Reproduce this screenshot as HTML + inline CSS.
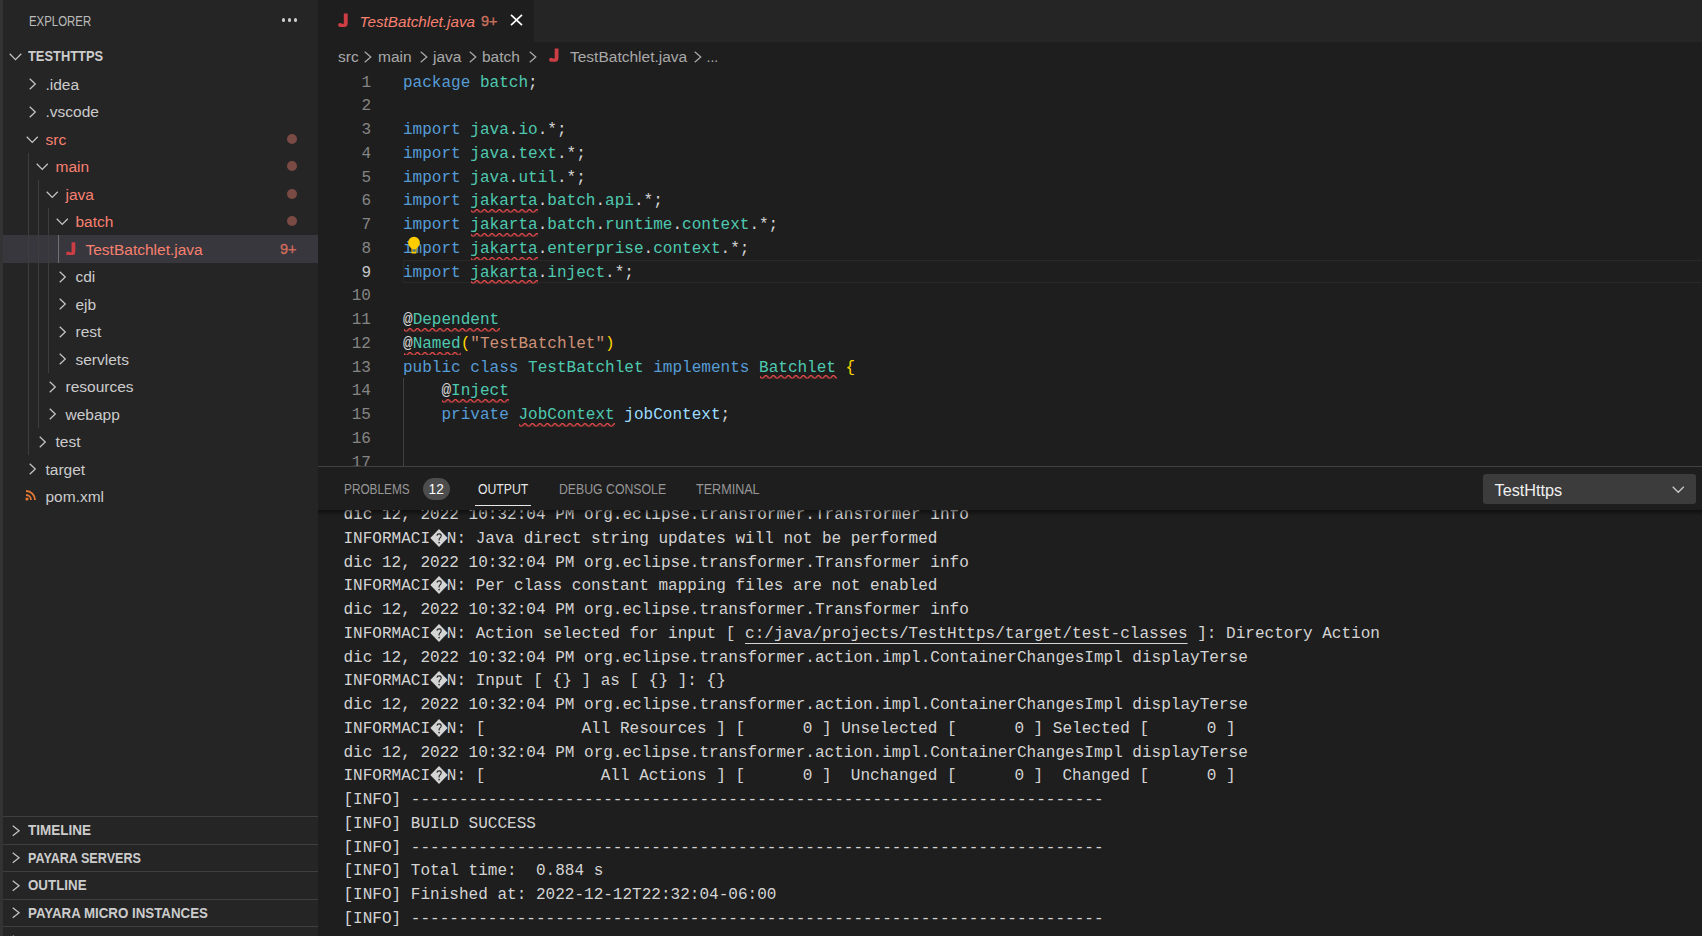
<!DOCTYPE html>
<html><head><meta charset="utf-8"><style>
html,body{margin:0;padding:0;width:1702px;height:936px;overflow:hidden;background:#1e1e1e}
body{position:relative;font-family:'Liberation Sans', sans-serif}
</style></head><body>
<div style="position:absolute;left:0px;top:0px;width:1702px;height:936px;background:#1e1e1e;"></div>
<div style="position:absolute;left:0px;top:0px;width:3px;height:936px;background:#333333;"></div>
<div style="position:absolute;left:3px;top:0px;width:315px;height:936px;background:#252526;"></div>
<div style="position:absolute;left:29px;top:22.23px;line-height:0;white-space:pre;font-family:'Liberation Sans', sans-serif;font-size:13.75px;color:#bbbbbb;transform:scaleX(0.83);transform-origin:0 0;">EXPLORER</div>
<div style="position:absolute;left:281.6px;top:18.4px;width:3.2px;height:3.2px;border-radius:50%;background:#cccccc"></div>
<div style="position:absolute;left:287.8px;top:18.4px;width:3.2px;height:3.2px;border-radius:50%;background:#cccccc"></div>
<div style="position:absolute;left:294.0px;top:18.4px;width:3.2px;height:3.2px;border-radius:50%;background:#cccccc"></div>
<svg style="position:absolute;left:9px;top:52.5px;overflow:visible" width="13" height="7.3" viewBox="0 0 13 7.3"><path d="M0.72 0.72 L6.50 6.58 L12.28 0.72" fill="none" stroke="#c5c5c5" stroke-width="1.25"/></svg>
<div style="position:absolute;left:28px;top:56.73px;line-height:0;white-space:pre;font-family:'Liberation Sans', sans-serif;font-size:13.75px;color:#cccccc;font-weight:700;transform:scaleX(0.937);transform-origin:0 0;">TESTHTTPS</div>
<div style="position:absolute;left:3px;top:235.0px;width:315px;height:27.5px;background:#37373d;"></div>
<div style="position:absolute;left:28px;top:152.5px;width:1px;height:302.5px;background:#3d3d3e;"></div>
<div style="position:absolute;left:38px;top:180.0px;width:1px;height:247.5px;background:#3d3d3e;"></div>
<div style="position:absolute;left:48px;top:207.5px;width:1px;height:165.0px;background:#3d3d3e;"></div>
<div style="position:absolute;left:58px;top:235.0px;width:1px;height:27.5px;background:#6f6f74;"></div>
<svg style="position:absolute;left:29px;top:78.0px;overflow:visible" width="7" height="12" viewBox="0 0 7 12"><path d="M0.72 0.72 L6.28 6.00 L0.72 11.28" fill="none" stroke="#c5c5c5" stroke-width="1.25"/></svg>
<div style="position:absolute;left:45.5px;top:84.63px;line-height:0;white-space:pre;font-family:'Liberation Sans', sans-serif;font-size:15.5px;color:#cccccc;">.idea</div>
<svg style="position:absolute;left:29px;top:105.5px;overflow:visible" width="7" height="12" viewBox="0 0 7 12"><path d="M0.72 0.72 L6.28 6.00 L0.72 11.28" fill="none" stroke="#c5c5c5" stroke-width="1.25"/></svg>
<div style="position:absolute;left:45.5px;top:112.13px;line-height:0;white-space:pre;font-family:'Liberation Sans', sans-serif;font-size:15.5px;color:#cccccc;">.vscode</div>
<svg style="position:absolute;left:25.5px;top:135.5px;overflow:visible" width="12.5" height="7.2" viewBox="0 0 12.5 7.2"><path d="M0.72 0.72 L6.25 6.48 L11.78 0.72" fill="none" stroke="#c5c5c5" stroke-width="1.25"/></svg>
<div style="position:absolute;left:45.5px;top:139.63px;line-height:0;white-space:pre;font-family:'Liberation Sans', sans-serif;font-size:15.5px;color:#f88070;">src</div>
<div style="position:absolute;left:287px;top:133.75px;width:10px;height:10px;border-radius:50%;background:#7a4a44"></div>
<svg style="position:absolute;left:35.5px;top:163.0px;overflow:visible" width="12.5" height="7.2" viewBox="0 0 12.5 7.2"><path d="M0.72 0.72 L6.25 6.48 L11.78 0.72" fill="none" stroke="#c5c5c5" stroke-width="1.25"/></svg>
<div style="position:absolute;left:55.5px;top:167.13px;line-height:0;white-space:pre;font-family:'Liberation Sans', sans-serif;font-size:15.5px;color:#f88070;">main</div>
<div style="position:absolute;left:287px;top:161.25px;width:10px;height:10px;border-radius:50%;background:#7a4a44"></div>
<svg style="position:absolute;left:45.5px;top:190.5px;overflow:visible" width="12.5" height="7.2" viewBox="0 0 12.5 7.2"><path d="M0.72 0.72 L6.25 6.48 L11.78 0.72" fill="none" stroke="#c5c5c5" stroke-width="1.25"/></svg>
<div style="position:absolute;left:65.5px;top:194.63px;line-height:0;white-space:pre;font-family:'Liberation Sans', sans-serif;font-size:15.5px;color:#f88070;">java</div>
<div style="position:absolute;left:287px;top:188.75px;width:10px;height:10px;border-radius:50%;background:#7a4a44"></div>
<svg style="position:absolute;left:55.5px;top:218.0px;overflow:visible" width="12.5" height="7.2" viewBox="0 0 12.5 7.2"><path d="M0.72 0.72 L6.25 6.48 L11.78 0.72" fill="none" stroke="#c5c5c5" stroke-width="1.25"/></svg>
<div style="position:absolute;left:75.5px;top:222.13px;line-height:0;white-space:pre;font-family:'Liberation Sans', sans-serif;font-size:15.5px;color:#f88070;">batch</div>
<div style="position:absolute;left:287px;top:216.25px;width:10px;height:10px;border-radius:50%;background:#7a4a44"></div>
<svg style="position:absolute;left:65.8px;top:241.5px" width="10.23" height="13.95" viewBox="0 0 11 15"><path d="M6 0.4 H10 V10.2 Q10 14.6 5.8 14.6 H3.6 Q0.1 14.6 0.1 12.3 Q0.1 10.2 2.2 10.2 Q3.2 10.2 3.9 10.8 Q4.5 11.3 5.1 11.3 Q6 11.3 6 10.2 Z" fill="#cc3e44"/></svg>
<div style="position:absolute;left:85.5px;top:249.63px;line-height:0;white-space:pre;font-family:'Liberation Sans', sans-serif;font-size:15.5px;color:#f88070;">TestBatchlet.java</div>
<div style="position:absolute;left:280px;top:248.97px;line-height:0;white-space:pre;font-family:'Liberation Sans', sans-serif;font-size:14.5px;color:#d06b5e;-webkit-text-stroke:0.35px #d06b5e;">9+</div>
<svg style="position:absolute;left:59px;top:270.5px;overflow:visible" width="7" height="12" viewBox="0 0 7 12"><path d="M0.72 0.72 L6.28 6.00 L0.72 11.28" fill="none" stroke="#c5c5c5" stroke-width="1.25"/></svg>
<div style="position:absolute;left:75.5px;top:277.13px;line-height:0;white-space:pre;font-family:'Liberation Sans', sans-serif;font-size:15.5px;color:#cccccc;">cdi</div>
<svg style="position:absolute;left:59px;top:298.0px;overflow:visible" width="7" height="12" viewBox="0 0 7 12"><path d="M0.72 0.72 L6.28 6.00 L0.72 11.28" fill="none" stroke="#c5c5c5" stroke-width="1.25"/></svg>
<div style="position:absolute;left:75.5px;top:304.63px;line-height:0;white-space:pre;font-family:'Liberation Sans', sans-serif;font-size:15.5px;color:#cccccc;">ejb</div>
<svg style="position:absolute;left:59px;top:325.5px;overflow:visible" width="7" height="12" viewBox="0 0 7 12"><path d="M0.72 0.72 L6.28 6.00 L0.72 11.28" fill="none" stroke="#c5c5c5" stroke-width="1.25"/></svg>
<div style="position:absolute;left:75.5px;top:332.13px;line-height:0;white-space:pre;font-family:'Liberation Sans', sans-serif;font-size:15.5px;color:#cccccc;">rest</div>
<svg style="position:absolute;left:59px;top:353.0px;overflow:visible" width="7" height="12" viewBox="0 0 7 12"><path d="M0.72 0.72 L6.28 6.00 L0.72 11.28" fill="none" stroke="#c5c5c5" stroke-width="1.25"/></svg>
<div style="position:absolute;left:75.5px;top:359.63px;line-height:0;white-space:pre;font-family:'Liberation Sans', sans-serif;font-size:15.5px;color:#cccccc;">servlets</div>
<svg style="position:absolute;left:49px;top:380.5px;overflow:visible" width="7" height="12" viewBox="0 0 7 12"><path d="M0.72 0.72 L6.28 6.00 L0.72 11.28" fill="none" stroke="#c5c5c5" stroke-width="1.25"/></svg>
<div style="position:absolute;left:65.5px;top:387.13px;line-height:0;white-space:pre;font-family:'Liberation Sans', sans-serif;font-size:15.5px;color:#cccccc;">resources</div>
<svg style="position:absolute;left:49px;top:408.0px;overflow:visible" width="7" height="12" viewBox="0 0 7 12"><path d="M0.72 0.72 L6.28 6.00 L0.72 11.28" fill="none" stroke="#c5c5c5" stroke-width="1.25"/></svg>
<div style="position:absolute;left:65.5px;top:414.63px;line-height:0;white-space:pre;font-family:'Liberation Sans', sans-serif;font-size:15.5px;color:#cccccc;">webapp</div>
<svg style="position:absolute;left:39px;top:435.5px;overflow:visible" width="7" height="12" viewBox="0 0 7 12"><path d="M0.72 0.72 L6.28 6.00 L0.72 11.28" fill="none" stroke="#c5c5c5" stroke-width="1.25"/></svg>
<div style="position:absolute;left:55.5px;top:442.13px;line-height:0;white-space:pre;font-family:'Liberation Sans', sans-serif;font-size:15.5px;color:#cccccc;">test</div>
<svg style="position:absolute;left:29px;top:463.0px;overflow:visible" width="7" height="12" viewBox="0 0 7 12"><path d="M0.72 0.72 L6.28 6.00 L0.72 11.28" fill="none" stroke="#c5c5c5" stroke-width="1.25"/></svg>
<div style="position:absolute;left:45.5px;top:469.63px;line-height:0;white-space:pre;font-family:'Liberation Sans', sans-serif;font-size:15.5px;color:#cccccc;">target</div>
<svg style="position:absolute;left:25px;top:489.5px" width="11" height="11" viewBox="0 0 11 11"><circle cx="2" cy="9" r="1.6" fill="#e37933"/><path d="M1 5 A5 5 0 0 1 6 10" fill="none" stroke="#e37933" stroke-width="1.8"/><path d="M1 1 A9 9 0 0 1 10 10" fill="none" stroke="#e37933" stroke-width="1.8"/></svg>
<div style="position:absolute;left:45.5px;top:497.13px;line-height:0;white-space:pre;font-family:'Liberation Sans', sans-serif;font-size:15.5px;color:#cccccc;">pom.xml</div>
<div style="position:absolute;left:3px;top:816.0px;width:315px;height:1px;background:#3f3f40;"></div>
<svg style="position:absolute;left:12.2px;top:824.5px;overflow:visible" width="7.8" height="11.5" viewBox="0 0 7.8 11.5"><path d="M0.72 0.72 L7.08 5.75 L0.72 10.78" fill="none" stroke="#c5c5c5" stroke-width="1.25"/></svg>
<div style="position:absolute;left:28.3px;top:831.23px;line-height:0;white-space:pre;font-family:'Liberation Sans', sans-serif;font-size:13.75px;color:#cccccc;font-weight:700;transform:scaleX(0.98);transform-origin:0 0;">TIMELINE</div>
<div style="position:absolute;left:3px;top:843.5px;width:315px;height:1px;background:#3f3f40;"></div>
<svg style="position:absolute;left:12.2px;top:852.0px;overflow:visible" width="7.8" height="11.5" viewBox="0 0 7.8 11.5"><path d="M0.72 0.72 L7.08 5.75 L0.72 10.78" fill="none" stroke="#c5c5c5" stroke-width="1.25"/></svg>
<div style="position:absolute;left:28.3px;top:858.73px;line-height:0;white-space:pre;font-family:'Liberation Sans', sans-serif;font-size:13.75px;color:#cccccc;font-weight:700;transform:scaleX(0.916);transform-origin:0 0;">PAYARA SERVERS</div>
<div style="position:absolute;left:3px;top:871.0px;width:315px;height:1px;background:#3f3f40;"></div>
<svg style="position:absolute;left:12.2px;top:879.5px;overflow:visible" width="7.8" height="11.5" viewBox="0 0 7.8 11.5"><path d="M0.72 0.72 L7.08 5.75 L0.72 10.78" fill="none" stroke="#c5c5c5" stroke-width="1.25"/></svg>
<div style="position:absolute;left:28.3px;top:886.23px;line-height:0;white-space:pre;font-family:'Liberation Sans', sans-serif;font-size:13.75px;color:#cccccc;font-weight:700;transform:scaleX(0.97);transform-origin:0 0;">OUTLINE</div>
<div style="position:absolute;left:3px;top:898.5px;width:315px;height:1px;background:#3f3f40;"></div>
<svg style="position:absolute;left:12.2px;top:907.0px;overflow:visible" width="7.8" height="11.5" viewBox="0 0 7.8 11.5"><path d="M0.72 0.72 L7.08 5.75 L0.72 10.78" fill="none" stroke="#c5c5c5" stroke-width="1.25"/></svg>
<div style="position:absolute;left:28.3px;top:913.73px;line-height:0;white-space:pre;font-family:'Liberation Sans', sans-serif;font-size:13.75px;color:#cccccc;font-weight:700;transform:scaleX(0.968);transform-origin:0 0;">PAYARA MICRO INSTANCES</div>
<div style="position:absolute;left:3px;top:926.0px;width:315px;height:1px;background:#3f3f40;"></div>
<svg style="position:absolute;left:12.2px;top:934.5px;overflow:visible" width="7.8" height="11.5" viewBox="0 0 7.8 11.5"><path d="M0.72 0.72 L7.08 5.75 L0.72 10.78" fill="none" stroke="#c5c5c5" stroke-width="1.25"/></svg>
<div style="position:absolute;left:318px;top:0px;width:1384px;height:42px;background:#252526;"></div>
<div style="position:absolute;left:318px;top:0px;width:216px;height:42px;background:#1e1e1e;"></div>
<svg style="position:absolute;left:338.1px;top:12.6px" width="10.67" height="14.55" viewBox="0 0 11 15"><path d="M6 0.4 H10 V10.2 Q10 14.6 5.8 14.6 H3.6 Q0.1 14.6 0.1 12.3 Q0.1 10.2 2.2 10.2 Q3.2 10.2 3.9 10.8 Q4.5 11.3 5.1 11.3 Q6 11.3 6 10.2 Z" fill="#cc3e44"/></svg>
<div style="position:absolute;left:359.5px;top:21.51px;line-height:0;white-space:pre;font-family:'Liberation Sans', sans-serif;font-size:15.25px;color:#f88070;font-style:italic;">TestBatchlet.java</div>
<div style="position:absolute;left:481px;top:21.47px;line-height:0;white-space:pre;font-family:'Liberation Sans', sans-serif;font-size:14.5px;color:#c8705f;-webkit-text-stroke:0.35px #c8705f;">9+</div>
<svg style="position:absolute;left:510px;top:14px" width="13" height="12" viewBox="0 0 13 12"><path d="M1 0.8 L12 11.2 M12 0.8 L1 11.2" stroke="#ffffff" stroke-width="1.7"/></svg>
<div style="position:absolute;left:338px;top:56.63px;line-height:0;white-space:pre;font-family:'Liberation Sans', sans-serif;font-size:15.5px;color:#a9a9a9;">src</div>
<svg style="position:absolute;left:364.3px;top:50.5px;overflow:visible" width="7.5" height="12" viewBox="0 0 7.5 12"><path d="M0.72 0.72 L6.78 6.00 L0.72 11.28" fill="none" stroke="#a9a9a9" stroke-width="1.25"/></svg>
<div style="position:absolute;left:378px;top:56.63px;line-height:0;white-space:pre;font-family:'Liberation Sans', sans-serif;font-size:15.5px;color:#a9a9a9;">main</div>
<svg style="position:absolute;left:420.3px;top:50.5px;overflow:visible" width="7.5" height="12" viewBox="0 0 7.5 12"><path d="M0.72 0.72 L6.78 6.00 L0.72 11.28" fill="none" stroke="#a9a9a9" stroke-width="1.25"/></svg>
<div style="position:absolute;left:433px;top:56.63px;line-height:0;white-space:pre;font-family:'Liberation Sans', sans-serif;font-size:15.5px;color:#a9a9a9;">java</div>
<svg style="position:absolute;left:468.8px;top:50.5px;overflow:visible" width="7.5" height="12" viewBox="0 0 7.5 12"><path d="M0.72 0.72 L6.78 6.00 L0.72 11.28" fill="none" stroke="#a9a9a9" stroke-width="1.25"/></svg>
<div style="position:absolute;left:482px;top:56.63px;line-height:0;white-space:pre;font-family:'Liberation Sans', sans-serif;font-size:15.5px;color:#a9a9a9;">batch</div>
<svg style="position:absolute;left:529.3px;top:50.5px;overflow:visible" width="7.5" height="12" viewBox="0 0 7.5 12"><path d="M0.72 0.72 L6.78 6.00 L0.72 11.28" fill="none" stroke="#a9a9a9" stroke-width="1.25"/></svg>
<svg style="position:absolute;left:549.4px;top:47.5px" width="10.45" height="14.25" viewBox="0 0 11 15"><path d="M6 0.4 H10 V10.2 Q10 14.6 5.8 14.6 H3.6 Q0.1 14.6 0.1 12.3 Q0.1 10.2 2.2 10.2 Q3.2 10.2 3.9 10.8 Q4.5 11.3 5.1 11.3 Q6 11.3 6 10.2 Z" fill="#cc3e44"/></svg>
<div style="position:absolute;left:570px;top:56.63px;line-height:0;white-space:pre;font-family:'Liberation Sans', sans-serif;font-size:15.5px;color:#a9a9a9;">TestBatchlet.java</div>
<svg style="position:absolute;left:693.5px;top:50.5px;overflow:visible" width="7.5" height="12" viewBox="0 0 7.5 12"><path d="M0.72 0.72 L6.78 6.00 L0.72 11.28" fill="none" stroke="#a9a9a9" stroke-width="1.25"/></svg>
<div style="position:absolute;left:706.5px;top:57.15px;line-height:0;white-space:pre;font-family:'Liberation Sans', sans-serif;font-size:14px;color:#a9a9a9;">...</div>
<svg width="0" height="0" style="position:absolute"><defs><pattern id="sq" patternUnits="userSpaceOnUse" width="7.5" height="3.75"><g fill="#f14c4c" transform="scale(1.25)"><polygon points="5.5,0 2.5,3 1.1,3 4.1,0"/><polygon points="4,0 6,2 6,0.6 5.4,0"/><polygon points="0,2 1,3 2.4,3 0,0.6"/></g></pattern></defs></svg>
<div style="position:absolute;left:318px;top:69px;width:1384px;height:397px;overflow:hidden">
<div style="position:absolute;left:85px;top:190.50px;width:1299px;height:21.75px;border:1px solid #282828;border-right:none"></div>
<div style="position:absolute;left:85px;top:309.25px;width:1px;height:200px;background:#404040"></div>
<div style="position:absolute;left:43.375px;top:13.73px;line-height:0;white-space:pre;font-family:'Liberation Mono', monospace;font-size:16.04px;color:#858585">1</div>
<div style="position:absolute;left:85px;top:13.73px;line-height:0;white-space:pre;font-family:'Liberation Mono', monospace;font-size:16.04px;color:#d4d4d4"><span style="color:#569cd6">package</span><span style="color:#d4d4d4"> </span><span style="color:#4ec9b0">batch</span><span style="color:#d4d4d4">;</span></div>
<div style="position:absolute;left:43.375px;top:37.48px;line-height:0;white-space:pre;font-family:'Liberation Mono', monospace;font-size:16.04px;color:#858585">2</div>
<div style="position:absolute;left:43.375px;top:61.23px;line-height:0;white-space:pre;font-family:'Liberation Mono', monospace;font-size:16.04px;color:#858585">3</div>
<div style="position:absolute;left:85px;top:61.23px;line-height:0;white-space:pre;font-family:'Liberation Mono', monospace;font-size:16.04px;color:#d4d4d4"><span style="color:#569cd6">import</span><span style="color:#d4d4d4"> </span><span style="color:#4ec9b0">java</span><span style="color:#d4d4d4">.</span><span style="color:#4ec9b0">io</span><span style="color:#d4d4d4">.*;</span></div>
<div style="position:absolute;left:43.375px;top:84.98px;line-height:0;white-space:pre;font-family:'Liberation Mono', monospace;font-size:16.04px;color:#858585">4</div>
<div style="position:absolute;left:85px;top:84.98px;line-height:0;white-space:pre;font-family:'Liberation Mono', monospace;font-size:16.04px;color:#d4d4d4"><span style="color:#569cd6">import</span><span style="color:#d4d4d4"> </span><span style="color:#4ec9b0">java</span><span style="color:#d4d4d4">.</span><span style="color:#4ec9b0">text</span><span style="color:#d4d4d4">.*;</span></div>
<div style="position:absolute;left:43.375px;top:108.73px;line-height:0;white-space:pre;font-family:'Liberation Mono', monospace;font-size:16.04px;color:#858585">5</div>
<div style="position:absolute;left:85px;top:108.73px;line-height:0;white-space:pre;font-family:'Liberation Mono', monospace;font-size:16.04px;color:#d4d4d4"><span style="color:#569cd6">import</span><span style="color:#d4d4d4"> </span><span style="color:#4ec9b0">java</span><span style="color:#d4d4d4">.</span><span style="color:#4ec9b0">util</span><span style="color:#d4d4d4">.*;</span></div>
<div style="position:absolute;left:43.375px;top:132.48px;line-height:0;white-space:pre;font-family:'Liberation Mono', monospace;font-size:16.04px;color:#858585">6</div>
<div style="position:absolute;left:85px;top:132.48px;line-height:0;white-space:pre;font-family:'Liberation Mono', monospace;font-size:16.04px;color:#d4d4d4"><span style="color:#569cd6">import</span><span style="color:#d4d4d4"> </span><span style="color:#4ec9b0">jakarta</span><span style="color:#d4d4d4">.</span><span style="color:#4ec9b0">batch</span><span style="color:#d4d4d4">.</span><span style="color:#4ec9b0">api</span><span style="color:#d4d4d4">.*;</span></div>
<svg style="position:absolute;left:152.88px;top:140.15px" width="67.38" height="3.75"><rect width="67.38" height="3.75" fill="url(#sq)"/></svg>
<div style="position:absolute;left:43.375px;top:156.23px;line-height:0;white-space:pre;font-family:'Liberation Mono', monospace;font-size:16.04px;color:#858585">7</div>
<div style="position:absolute;left:85px;top:156.23px;line-height:0;white-space:pre;font-family:'Liberation Mono', monospace;font-size:16.04px;color:#d4d4d4"><span style="color:#569cd6">import</span><span style="color:#d4d4d4"> </span><span style="color:#4ec9b0">jakarta</span><span style="color:#d4d4d4">.</span><span style="color:#4ec9b0">batch</span><span style="color:#d4d4d4">.</span><span style="color:#4ec9b0">runtime</span><span style="color:#d4d4d4">.</span><span style="color:#4ec9b0">context</span><span style="color:#d4d4d4">.*;</span></div>
<svg style="position:absolute;left:152.88px;top:163.90px" width="67.38" height="3.75"><rect width="67.38" height="3.75" fill="url(#sq)"/></svg>
<div style="position:absolute;left:43.375px;top:179.98px;line-height:0;white-space:pre;font-family:'Liberation Mono', monospace;font-size:16.04px;color:#858585">8</div>
<div style="position:absolute;left:85px;top:179.98px;line-height:0;white-space:pre;font-family:'Liberation Mono', monospace;font-size:16.04px;color:#d4d4d4"><span style="color:#569cd6">import</span><span style="color:#d4d4d4"> </span><span style="color:#4ec9b0">jakarta</span><span style="color:#d4d4d4">.</span><span style="color:#4ec9b0">enterprise</span><span style="color:#d4d4d4">.</span><span style="color:#4ec9b0">context</span><span style="color:#d4d4d4">.*;</span></div>
<svg style="position:absolute;left:152.88px;top:187.65px" width="67.38" height="3.75"><rect width="67.38" height="3.75" fill="url(#sq)"/></svg>
<div style="position:absolute;left:43.375px;top:203.73px;line-height:0;white-space:pre;font-family:'Liberation Mono', monospace;font-size:16.04px;color:#c6c6c6">9</div>
<div style="position:absolute;left:85px;top:203.73px;line-height:0;white-space:pre;font-family:'Liberation Mono', monospace;font-size:16.04px;color:#d4d4d4"><span style="color:#569cd6">import</span><span style="color:#d4d4d4"> </span><span style="color:#4ec9b0">jakarta</span><span style="color:#d4d4d4">.</span><span style="color:#4ec9b0">inject</span><span style="color:#d4d4d4">.*;</span></div>
<svg style="position:absolute;left:152.88px;top:211.40px" width="67.38" height="3.75"><rect width="67.38" height="3.75" fill="url(#sq)"/></svg>
<div style="position:absolute;left:33.75px;top:227.48px;line-height:0;white-space:pre;font-family:'Liberation Mono', monospace;font-size:16.04px;color:#858585">10</div>
<div style="position:absolute;left:33.75px;top:251.23px;line-height:0;white-space:pre;font-family:'Liberation Mono', monospace;font-size:16.04px;color:#858585">11</div>
<div style="position:absolute;left:85px;top:251.23px;line-height:0;white-space:pre;font-family:'Liberation Mono', monospace;font-size:16.04px;color:#d4d4d4"><span style="color:#d4d4d4">@</span><span style="color:#4ec9b0">Dependent</span></div>
<svg style="position:absolute;left:85.50px;top:258.90px" width="96.25" height="3.75"><rect width="96.25" height="3.75" fill="url(#sq)"/></svg>
<div style="position:absolute;left:33.75px;top:274.98px;line-height:0;white-space:pre;font-family:'Liberation Mono', monospace;font-size:16.04px;color:#858585">12</div>
<div style="position:absolute;left:85px;top:274.98px;line-height:0;white-space:pre;font-family:'Liberation Mono', monospace;font-size:16.04px;color:#d4d4d4"><span style="color:#d4d4d4">@</span><span style="color:#4ec9b0">Named</span><span style="color:#ffd700">(</span><span style="color:#ce9178">&quot;TestBatchlet&quot;</span><span style="color:#ffd700">)</span></div>
<svg style="position:absolute;left:85.50px;top:282.65px" width="57.75" height="3.75"><rect width="57.75" height="3.75" fill="url(#sq)"/></svg>
<div style="position:absolute;left:33.75px;top:298.73px;line-height:0;white-space:pre;font-family:'Liberation Mono', monospace;font-size:16.04px;color:#858585">13</div>
<div style="position:absolute;left:85px;top:298.73px;line-height:0;white-space:pre;font-family:'Liberation Mono', monospace;font-size:16.04px;color:#d4d4d4"><span style="color:#569cd6">public</span><span style="color:#d4d4d4"> </span><span style="color:#569cd6">class</span><span style="color:#d4d4d4"> </span><span style="color:#4ec9b0">TestBatchlet</span><span style="color:#d4d4d4"> </span><span style="color:#569cd6">implements</span><span style="color:#d4d4d4"> </span><span style="color:#4ec9b0">Batchlet</span><span style="color:#d4d4d4"> </span><span style="color:#ffd700">{</span></div>
<svg style="position:absolute;left:441.62px;top:306.40px" width="77.00" height="3.75"><rect width="77.00" height="3.75" fill="url(#sq)"/></svg>
<div style="position:absolute;left:33.75px;top:322.48px;line-height:0;white-space:pre;font-family:'Liberation Mono', monospace;font-size:16.04px;color:#858585">14</div>
<div style="position:absolute;left:85px;top:322.48px;line-height:0;white-space:pre;font-family:'Liberation Mono', monospace;font-size:16.04px;color:#d4d4d4"><span style="color:#d4d4d4">    </span><span style="color:#d4d4d4">@</span><span style="color:#4ec9b0">Inject</span></div>
<svg style="position:absolute;left:124.00px;top:330.15px" width="67.38" height="3.75"><rect width="67.38" height="3.75" fill="url(#sq)"/></svg>
<div style="position:absolute;left:33.75px;top:346.23px;line-height:0;white-space:pre;font-family:'Liberation Mono', monospace;font-size:16.04px;color:#858585">15</div>
<div style="position:absolute;left:85px;top:346.23px;line-height:0;white-space:pre;font-family:'Liberation Mono', monospace;font-size:16.04px;color:#d4d4d4"><span style="color:#d4d4d4">    </span><span style="color:#569cd6">private</span><span style="color:#d4d4d4"> </span><span style="color:#4ec9b0">JobContext</span><span style="color:#d4d4d4"> </span><span style="color:#9cdcfe">jobContext</span><span style="color:#d4d4d4">;</span></div>
<svg style="position:absolute;left:201.00px;top:353.90px" width="96.25" height="3.75"><rect width="96.25" height="3.75" fill="url(#sq)"/></svg>
<div style="position:absolute;left:33.75px;top:369.98px;line-height:0;white-space:pre;font-family:'Liberation Mono', monospace;font-size:16.04px;color:#858585">16</div>
<div style="position:absolute;left:33.75px;top:393.73px;line-height:0;white-space:pre;font-family:'Liberation Mono', monospace;font-size:16.04px;color:#858585">17</div>
<svg style="position:absolute;left:89px;top:167.20px" width="14" height="19" viewBox="0 0 14 19"><path fill-rule="evenodd" d="M7 0.8 A5.9 5.9 0 0 1 12.9 6.7 C12.9 8.9 11.6 10.4 9.6 12.6 L9.4 17.6 L4.6 17.6 L4.4 12.6 C2.4 10.4 1.1 8.9 1.1 6.7 A5.9 5.9 0 0 1 7 0.8 Z M5.6 13.2 L8.4 13.2 L8.4 15.8 L5.6 15.8 Z" fill="#ffcc00"/></svg>
</div>
<div style="position:absolute;left:318px;top:466px;width:1384px;height:470px;background:#1e1e1e;"></div>
<div style="position:absolute;left:318px;top:466px;width:1384px;height:1px;background:#414141;"></div>
<div style="position:absolute;left:344px;top:490.23px;line-height:0;white-space:pre;font-family:'Liberation Sans', sans-serif;font-size:13.75px;color:#969696;transform:scaleX(0.86);transform-origin:0 0;">PROBLEMS</div>
<div style="position:absolute;left:423px;top:478px;width:27px;height:22px;border-radius:11px;background:#4d4d4d"></div>
<div style="position:absolute;left:428.5px;top:490.23px;line-height:0;white-space:pre;font-family:'Liberation Sans', sans-serif;font-size:13.75px;color:#ffffff;">12</div>
<div style="position:absolute;left:478px;top:490.23px;line-height:0;white-space:pre;font-family:'Liberation Sans', sans-serif;font-size:13.75px;color:#e7e7e7;transform:scaleX(0.89);transform-origin:0 0;">OUTPUT</div>
<div style="position:absolute;left:475px;top:504.5px;width:56px;height:1.6px;background:#e7e7e7;"></div>
<div style="position:absolute;left:559.3px;top:490.23px;line-height:0;white-space:pre;font-family:'Liberation Sans', sans-serif;font-size:13.75px;color:#969696;transform:scaleX(0.893);transform-origin:0 0;">DEBUG CONSOLE</div>
<div style="position:absolute;left:696px;top:490.23px;line-height:0;white-space:pre;font-family:'Liberation Sans', sans-serif;font-size:13.75px;color:#969696;transform:scaleX(0.915);transform-origin:0 0;">TERMINAL</div>
<div style="position:absolute;left:1483px;top:474px;width:213px;height:30px;border-radius:3px;background:#3c3c3c"></div>
<div style="position:absolute;left:1494.5px;top:489.97px;line-height:0;white-space:pre;font-family:'Liberation Sans', sans-serif;font-size:16.25px;color:#f0f0f0;">TestHttps</div>
<svg style="position:absolute;left:1672px;top:486px;overflow:visible" width="12.5" height="7" viewBox="0 0 12.5 7"><path d="M0.72 0.72 L6.25 6.28 L11.78 0.72" fill="none" stroke="#cccccc" stroke-width="1.25"/></svg>
<div style="position:absolute;left:318px;top:510px;width:1384px;height:426px;overflow:hidden">
<div style="position:absolute;left:25.5px;top:5.23px;line-height:0;white-space:pre;font-family:'Liberation Mono', monospace;font-size:16.04px;color:#d4d4d4">dic 12, 2022 10:32:04 PM org.eclipse.transformer.Transformer info</div>
<div style="position:absolute;left:25.5px;top:28.98px;line-height:0;white-space:pre;font-family:'Liberation Mono', monospace;font-size:16.04px;color:#d4d4d4">INFORMACI<span style="display:inline-block;width:16.7px;height:1px;position:relative"><svg style="position:absolute;left:-0.4px;top:-13.2px" width="18" height="18" viewBox="0 0 18 18"><path d="M9 0 L17.7 9 L9 18 L0.3 9 Z" fill="#d4d4d4"/><path d="M6.9 6.6 Q7.1 4.9 9.1 4.9 Q11.2 4.9 11.2 6.8 Q11.2 8.2 9.9 8.9 Q9.1 9.4 9.1 10.7 V11.6" fill="none" stroke="#1e1e1e" stroke-width="1.1"/><rect x="8.45" y="12.9" width="1.3" height="1.4" fill="#1e1e1e"/></svg></span>N: Java direct string updates will not be performed</div>
<div style="position:absolute;left:25.5px;top:52.73px;line-height:0;white-space:pre;font-family:'Liberation Mono', monospace;font-size:16.04px;color:#d4d4d4">dic 12, 2022 10:32:04 PM org.eclipse.transformer.Transformer info</div>
<div style="position:absolute;left:25.5px;top:76.48px;line-height:0;white-space:pre;font-family:'Liberation Mono', monospace;font-size:16.04px;color:#d4d4d4">INFORMACI<span style="display:inline-block;width:16.7px;height:1px;position:relative"><svg style="position:absolute;left:-0.4px;top:-13.2px" width="18" height="18" viewBox="0 0 18 18"><path d="M9 0 L17.7 9 L9 18 L0.3 9 Z" fill="#d4d4d4"/><path d="M6.9 6.6 Q7.1 4.9 9.1 4.9 Q11.2 4.9 11.2 6.8 Q11.2 8.2 9.9 8.9 Q9.1 9.4 9.1 10.7 V11.6" fill="none" stroke="#1e1e1e" stroke-width="1.1"/><rect x="8.45" y="12.9" width="1.3" height="1.4" fill="#1e1e1e"/></svg></span>N: Per class constant mapping files are not enabled</div>
<div style="position:absolute;left:25.5px;top:100.23px;line-height:0;white-space:pre;font-family:'Liberation Mono', monospace;font-size:16.04px;color:#d4d4d4">dic 12, 2022 10:32:04 PM org.eclipse.transformer.Transformer info</div>
<div style="position:absolute;left:25.5px;top:123.98px;line-height:0;white-space:pre;font-family:'Liberation Mono', monospace;font-size:16.04px;color:#d4d4d4">INFORMACI<span style="display:inline-block;width:16.7px;height:1px;position:relative"><svg style="position:absolute;left:-0.4px;top:-13.2px" width="18" height="18" viewBox="0 0 18 18"><path d="M9 0 L17.7 9 L9 18 L0.3 9 Z" fill="#d4d4d4"/><path d="M6.9 6.6 Q7.1 4.9 9.1 4.9 Q11.2 4.9 11.2 6.8 Q11.2 8.2 9.9 8.9 Q9.1 9.4 9.1 10.7 V11.6" fill="none" stroke="#1e1e1e" stroke-width="1.1"/><rect x="8.45" y="12.9" width="1.3" height="1.4" fill="#1e1e1e"/></svg></span>N: Action selected for input [ <span style="text-decoration:underline;text-underline-offset:4.5px;text-decoration-thickness:1.3px">c:/java/projects/TestHttps/target/test-classes</span> ]: Directory Action</div>
<div style="position:absolute;left:25.5px;top:147.73px;line-height:0;white-space:pre;font-family:'Liberation Mono', monospace;font-size:16.04px;color:#d4d4d4">dic 12, 2022 10:32:04 PM org.eclipse.transformer.action.impl.ContainerChangesImpl displayTerse</div>
<div style="position:absolute;left:25.5px;top:171.48px;line-height:0;white-space:pre;font-family:'Liberation Mono', monospace;font-size:16.04px;color:#d4d4d4">INFORMACI<span style="display:inline-block;width:16.7px;height:1px;position:relative"><svg style="position:absolute;left:-0.4px;top:-13.2px" width="18" height="18" viewBox="0 0 18 18"><path d="M9 0 L17.7 9 L9 18 L0.3 9 Z" fill="#d4d4d4"/><path d="M6.9 6.6 Q7.1 4.9 9.1 4.9 Q11.2 4.9 11.2 6.8 Q11.2 8.2 9.9 8.9 Q9.1 9.4 9.1 10.7 V11.6" fill="none" stroke="#1e1e1e" stroke-width="1.1"/><rect x="8.45" y="12.9" width="1.3" height="1.4" fill="#1e1e1e"/></svg></span>N: Input [ {} ] as [ {} ]: {}</div>
<div style="position:absolute;left:25.5px;top:195.23px;line-height:0;white-space:pre;font-family:'Liberation Mono', monospace;font-size:16.04px;color:#d4d4d4">dic 12, 2022 10:32:04 PM org.eclipse.transformer.action.impl.ContainerChangesImpl displayTerse</div>
<div style="position:absolute;left:25.5px;top:218.98px;line-height:0;white-space:pre;font-family:'Liberation Mono', monospace;font-size:16.04px;color:#d4d4d4">INFORMACI<span style="display:inline-block;width:16.7px;height:1px;position:relative"><svg style="position:absolute;left:-0.4px;top:-13.2px" width="18" height="18" viewBox="0 0 18 18"><path d="M9 0 L17.7 9 L9 18 L0.3 9 Z" fill="#d4d4d4"/><path d="M6.9 6.6 Q7.1 4.9 9.1 4.9 Q11.2 4.9 11.2 6.8 Q11.2 8.2 9.9 8.9 Q9.1 9.4 9.1 10.7 V11.6" fill="none" stroke="#1e1e1e" stroke-width="1.1"/><rect x="8.45" y="12.9" width="1.3" height="1.4" fill="#1e1e1e"/></svg></span>N: [          All Resources ] [      0 ] Unselected [      0 ] Selected [      0 ]</div>
<div style="position:absolute;left:25.5px;top:242.73px;line-height:0;white-space:pre;font-family:'Liberation Mono', monospace;font-size:16.04px;color:#d4d4d4">dic 12, 2022 10:32:04 PM org.eclipse.transformer.action.impl.ContainerChangesImpl displayTerse</div>
<div style="position:absolute;left:25.5px;top:266.48px;line-height:0;white-space:pre;font-family:'Liberation Mono', monospace;font-size:16.04px;color:#d4d4d4">INFORMACI<span style="display:inline-block;width:16.7px;height:1px;position:relative"><svg style="position:absolute;left:-0.4px;top:-13.2px" width="18" height="18" viewBox="0 0 18 18"><path d="M9 0 L17.7 9 L9 18 L0.3 9 Z" fill="#d4d4d4"/><path d="M6.9 6.6 Q7.1 4.9 9.1 4.9 Q11.2 4.9 11.2 6.8 Q11.2 8.2 9.9 8.9 Q9.1 9.4 9.1 10.7 V11.6" fill="none" stroke="#1e1e1e" stroke-width="1.1"/><rect x="8.45" y="12.9" width="1.3" height="1.4" fill="#1e1e1e"/></svg></span>N: [            All Actions ] [      0 ]  Unchanged [      0 ]  Changed [      0 ]</div>
<div style="position:absolute;left:25.5px;top:290.23px;line-height:0;white-space:pre;font-family:'Liberation Mono', monospace;font-size:16.04px;color:#d4d4d4">[INFO] ------------------------------------------------------------------------</div>
<div style="position:absolute;left:25.5px;top:313.98px;line-height:0;white-space:pre;font-family:'Liberation Mono', monospace;font-size:16.04px;color:#d4d4d4">[INFO] BUILD SUCCESS</div>
<div style="position:absolute;left:25.5px;top:337.73px;line-height:0;white-space:pre;font-family:'Liberation Mono', monospace;font-size:16.04px;color:#d4d4d4">[INFO] ------------------------------------------------------------------------</div>
<div style="position:absolute;left:25.5px;top:361.48px;line-height:0;white-space:pre;font-family:'Liberation Mono', monospace;font-size:16.04px;color:#d4d4d4">[INFO] Total time:  0.884 s</div>
<div style="position:absolute;left:25.5px;top:385.23px;line-height:0;white-space:pre;font-family:'Liberation Mono', monospace;font-size:16.04px;color:#d4d4d4">[INFO] Finished at: 2022-12-12T22:32:04-06:00</div>
<div style="position:absolute;left:25.5px;top:408.98px;line-height:0;white-space:pre;font-family:'Liberation Mono', monospace;font-size:16.04px;color:#d4d4d4">[INFO] ------------------------------------------------------------------------</div>
<div style="position:absolute;left:25.5px;top:432.73px;line-height:0;white-space:pre;font-family:'Liberation Mono', monospace;font-size:16.04px;color:#d4d4d4"></div>
</div>
<div style="position:absolute;left:318px;top:510px;width:1384px;height:6px;background:linear-gradient(#00000080,#00000000)"></div>
</body></html>
